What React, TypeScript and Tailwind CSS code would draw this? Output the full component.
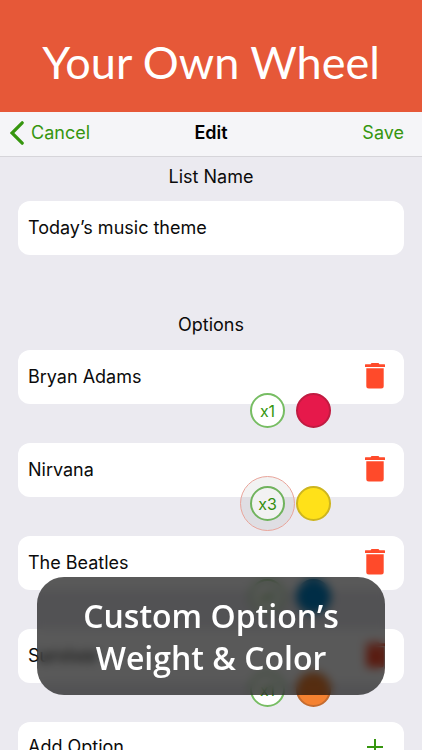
import { useState } from 'react'

type Option = {
  id: number
  name: string
  weight: number
  color: string
}

const initialOptions: Option[] = [
  { id: 1, name: 'Bryan Adams', weight: 1, color: 'bg-[#e6194b] border-[#c01b41]' },
  { id: 2, name: 'Nirvana', weight: 3, color: 'bg-[#ffe119] border-[#cdb51f]' },
  { id: 3, name: 'The Beatles', weight: 1, color: 'bg-[#0082c8] border-[#0a6da3]' },
  { id: 4, name: 'Survivor', weight: 1, color: 'bg-[#f58231] border-[#c46c30]' },
]

const MAX_WEIGHT = 5

function TrashIcon() {
  return (
    <svg viewBox="0 0 20 26" className="h-[26px] w-5" fill="#ff4a2a" aria-hidden="true">
      <path d="M0 1.8Q0 1.3 .5 1.3H5.6Q6 0 7 0H13Q14 0 14.4 1.3H19.5Q20 1.3 20 1.8V4H0Z" />
      <path d="M1.3 5.2H18.7V23Q18.7 25.5 16.2 25.5H3.8Q1.3 25.5 1.3 23Z" />
    </svg>
  )
}

function OptionRow({
  option,
  active,
  onRename,
  onWeight,
  onDelete,
}: {
  option: Option
  active: boolean
  onRename: (name: string) => void
  onWeight: () => void
  onDelete: () => void
}) {
  return (
    <li className="relative flex h-[54px] items-center rounded-xl bg-white pr-[19px] pb-0.5">
      <input
        aria-label="Option name"
        value={option.name}
        onChange={(e) => onRename(e.target.value)}
        className="h-full min-w-0 flex-1 bg-transparent pl-[10px] outline-none"
      />
      <button type="button" aria-label={`Delete ${option.name}`} onClick={onDelete}>
        <TrashIcon />
      </button>

      {/* weight and colour badges hang over the bottom edge of the card */}
      <div className="absolute top-[43px] right-[73px] flex gap-[11px]">
        <button
          type="button"
          aria-label={`Weight x${option.weight}`}
          onClick={onWeight}
          className="relative size-[35px] rounded-full border-2 border-[#77bd63] bg-white text-base leading-none text-[#36960f]"
        >
          x{option.weight}
          {active && (
            <span className="absolute -inset-3 rounded-full border border-[#e9a59b] bg-black/5" />
          )}
        </button>
        <button
          type="button"
          aria-label={`Color of ${option.name}`}
          className={`size-[35px] rounded-full border-2 ${option.color}`}
        />
      </div>
    </li>
  )
}

export default function App() {
  const [listName, setListName] = useState('Today’s music theme')
  const [options, setOptions] = useState(initialOptions)
  const [activeId, setActiveId] = useState(2)

  const update = (id: number, patch: Partial<Option>) => {
    setOptions((prev) => prev.map((o) => (o.id === id ? { ...o, ...patch } : o)))
  }

  const addOption = () => {
    setOptions((prev) => [
      ...prev,
      { id: Date.now(), name: '', weight: 1, color: 'bg-[#3cb44b] border-[#2f933c]' },
    ])
  }

  return (
    <div className="relative flex h-screen flex-col overflow-hidden bg-[#ebeaf0] font-['Inter',sans-serif] text-lg text-[#0b0b0b]">
      <header className="shrink-0 bg-[#e65838] pt-8 pb-5 text-center">
        <h1 className="font-['Lato',sans-serif] text-[45px] leading-[60px] text-white">
          Your Own Wheel
        </h1>
      </header>

      <nav className="grid h-[45px] shrink-0 grid-cols-3 items-center border-b border-[#d6d5da] bg-[#f5f5f8] pr-[18px] pb-0.5 pl-[10px]">
        <button type="button" className="flex items-center gap-[7px] text-[#36960f]">
          <svg viewBox="0 0 14 24" className="h-6 w-[14px]" fill="none" aria-hidden="true">
            <path
              d="M12.2 1.8L2 12L12.2 22.2"
              stroke="#36960f"
              strokeWidth="3.2"
              strokeLinecap="round"
            />
          </svg>
          Cancel
        </button>
        <h2 className="pl-2 text-center font-semibold text-black">Edit</h2>
        <button type="button" className="justify-self-end text-[#36960f]">
          Save
        </button>
      </nav>

      <main className="min-h-0 flex-1 px-[18px] pt-1.5">
        <label htmlFor="list-name" className="block text-center leading-7">
          List Name
        </label>
        <input
          id="list-name"
          value={listName}
          onChange={(e) => setListName(e.target.value)}
          className="mt-[10px] block h-[54px] w-full rounded-xl bg-white px-[10px] pb-0.5 outline-none"
        />

        <h3 className="mt-14 text-center leading-7">Options</h3>
        <ul className="mt-[11px] flex flex-col gap-[39px]">
          {options.map((option) => (
            <OptionRow
              key={option.id}
              option={option}
              active={option.id === activeId}
              onRename={(name) => update(option.id, { name })}
              onWeight={() => {
                setActiveId(option.id)
                update(option.id, { weight: (option.weight % MAX_WEIGHT) + 1 })
              }}
              onDelete={() => setOptions((prev) => prev.filter((o) => o.id !== option.id))}
            />
          ))}
          <li>
            <button
              type="button"
              onClick={addOption}
              className="flex h-[54px] w-full items-center justify-between rounded-xl bg-white pr-[21px] pb-1 pl-[10px]"
            >
              Add Option
              <svg viewBox="0 0 16 16" className="size-4" aria-hidden="true">
                <path d="M8 0V16M0 8H16" stroke="#36960f" strokeWidth="2" />
              </svg>
            </button>
          </li>
        </ul>
      </main>

      <div className="absolute inset-x-[37px] bottom-[55px] rounded-[27px] bg-black/65 pt-[18px] pb-4 text-center font-['Open_Sans',sans-serif] text-[32px] leading-[42px] font-semibold text-white backdrop-blur-[5px]">
        <p>
          Custom Option’s
          <br />
          Weight &amp; Color
        </p>
      </div>
    </div>
  )
}
